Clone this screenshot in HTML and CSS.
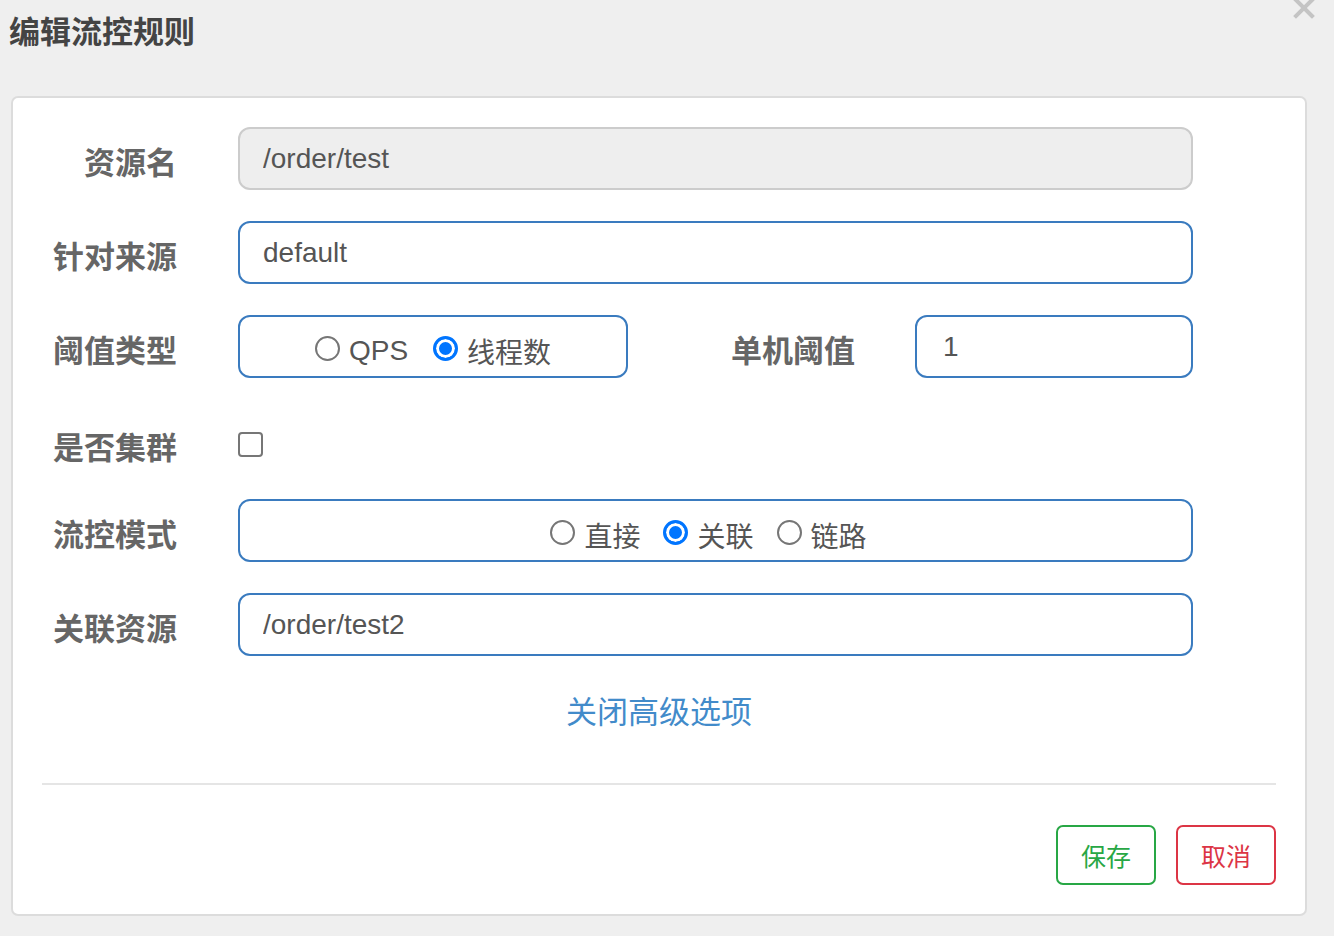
FILE: index.html
```html
<!DOCTYPE html>
<html lang="zh-CN">
<head>
<meta charset="utf-8">
<title>编辑流控规则</title>
<link rel="stylesheet" href="styles.css">
</head>
<body>
<div class="modal">
  <header class="modal-header">
    <h2 class="title">编辑流控规则</h2>
    <button class="close" type="button" aria-label="关闭">
      <svg width="22" height="22" viewBox="0 0 22 22"><path d="M3 3 L19 19 M19 3 L3 19" stroke="#c4c4c4" stroke-width="4" stroke-linecap="square" fill="none"/></svg>
    </button>
  </header>
  <div class="card">
    <form class="form">
      <div class="row">
        <label class="label">资源名</label>
        <input class="input input-disabled" type="text" value="/order/test" disabled>
      </div>
      <div class="row">
        <label class="label">针对来源</label>
        <input class="input" type="text" value="default">
      </div>
      <div class="row">
        <label class="label">阈值类型</label>
        <div class="radio-box radio-box-small">
          <label class="radio"><input type="radio" name="grade"><span>QPS</span></label>
          <label class="radio"><input type="radio" name="grade" checked><span>线程数</span></label>
        </div>
        <label class="label label-inline">单机阈值</label>
        <input class="input input-small" type="text" value="1">
      </div>
      <div class="row row-check">
        <label class="label">是否集群</label>
        <input class="checkbox" type="checkbox">
      </div>
      <div class="row">
        <label class="label">流控模式</label>
        <div class="radio-box radio-box-wide">
          <label class="radio"><input type="radio" name="strategy"><span>直接</span></label>
          <label class="radio"><input type="radio" name="strategy" checked><span>关联</span></label>
          <label class="radio"><input type="radio" name="strategy"><span>链路</span></label>
        </div>
      </div>
      <div class="row">
        <label class="label">关联资源</label>
        <input class="input" type="text" value="/order/test2">
      </div>
    </form>
    <div class="advanced"><a class="link" href="#">关闭高级选项</a></div>
    <div class="divider"></div>
    <div class="actions">
      <button class="btn btn-save" type="button">保存</button>
      <button class="btn btn-cancel" type="button">取消</button>
    </div>
  </div>
</div>
</body>
</html>
```
FILE: styles.css
```css
* { box-sizing: border-box; }
html, body {
  margin: 0;
  padding: 0;
  background: #efefef;
  width: 1334px;
  height: 936px;
  overflow: hidden;
}
body {
  font-family: "Liberation Sans", "Noto Sans CJK SC", sans-serif;
  color: #555;
}
.modal {
  padding: 0 27px 0 11px;
}
.modal-header {
  display: flex;
  justify-content: space-between;
  align-items: flex-start;
  height: 96px;
}
.title {
  margin: 0;
  margin-left: -2px;
  padding-top: 12px;
  font-size: 31px;
  line-height: 36px;
  font-weight: bold;
  color: #444;
  font-family: "Noto Sans CJK SC", sans-serif;
}
.close {
  border: 0;
  background: none;
  padding: 0;
  margin: -3px -8px 0 0;
  width: 22px;
  height: 22px;
  cursor: pointer;
}
.close svg { display: block; }
.card {
  background: #fff;
  border: 2px solid #dcdcdc;
  border-radius: 7px;
  padding: 29px 29px 29px 29px;
}
.form {
  padding-right: 83px;
}
.row {
  display: flex;
  align-items: center;
  height: 63px;
  margin-bottom: 31px;
}
.row:last-child { margin-bottom: 0; }
.row-check {
  height: 59px;
  padding-top: 12px;
}
.label {
  flex: 0 0 135px;
  width: 135px;
  margin-right: 61px;
  padding-top: 4px;
  text-align: right;
  font-family: "Noto Sans CJK SC", sans-serif;
  font-weight: bold;
  font-size: 31px;
  color: #666;
  white-space: nowrap;
}
.row-check .label { padding-top: 2px; }
.label-inline {
  flex: 1 1 auto;
  width: auto;
  margin-right: 60px;
}
.input {
  flex: 1 1 auto;
  height: 63px;
  border: 2px solid #3a7bbf;
  border-radius: 12px;
  padding: 0 0 0 23px;
  font-family: "Liberation Sans", "Noto Sans CJK SC", sans-serif;
  font-size: 28px;
  color: #555;
  background: #fff;
  outline: none;
}
.input-disabled {
  background: #eeeeee;
  border-color: #cccccc;
  color: #555;
  -webkit-text-fill-color: #555;
  opacity: 1;
}
.input-small {
  flex: 0 0 278px;
  width: 278px;
  padding-left: 26px;
}
.radio-box {
  height: 63px;
  border: 2px solid #3a7bbf;
  border-radius: 12px;
  display: flex;
  align-items: center;
  justify-content: center;
  gap: 25px;
}
.radio-box-small {
  flex: 0 0 390px;
  width: 390px;
}
.radio-box-wide {
  flex: 1 1 auto;
  gap: 23px;
  padding-right: 14px;
}
.radio {
  display: flex;
  align-items: center;
  gap: 9px;
  font-size: 28px;
  color: #555;
  cursor: pointer;
}
.radio span {
  position: relative;
  top: 4px;
  font-family: "Liberation Sans", "Noto Sans CJK SC", sans-serif;
}
.radio input {
  -webkit-appearance: none;
  appearance: none;
  width: 25px;
  height: 25px;
  margin: 3px 0 0 0;
  border: 2px solid #767676;
  border-radius: 50%;
  background: #fff;
  flex: 0 0 25px;
}
.radio input:checked {
  border: 3px solid #0075ff;
  background: #0075ff;
  box-shadow: inset 0 0 0 3px #fff;
}
.checkbox {
  -webkit-appearance: none;
  appearance: none;
  width: 25px;
  height: 25px;
  margin: 0;
  border: 2px solid #767676;
  border-radius: 4px;
  background: #fff;
}
.advanced {
  text-align: center;
  margin-top: 36px;
  line-height: 36px;
  height: 36px;
}
.link {
  font-family: "Noto Sans CJK SC", sans-serif;
  font-size: 31px;
  color: #428bca;
  text-decoration: none;
}
.divider {
  height: 2px;
  background: #e5e5e5;
  margin-top: 55px;
}
.actions {
  display: flex;
  justify-content: flex-end;
  gap: 20px;
  margin-top: 40px;
}
.btn {
  width: 100px;
  height: 60px;
  border-radius: 7px;
  background: #fff;
  font-family: "Noto Sans CJK SC", sans-serif;
  font-size: 25px;
  padding: 0;
  cursor: pointer;
}
.btn-save {
  border: 2px solid #28a745;
  color: #28a745;
}
.btn-cancel {
  border: 2px solid #dc3545;
  color: #dc3545;
}
```
